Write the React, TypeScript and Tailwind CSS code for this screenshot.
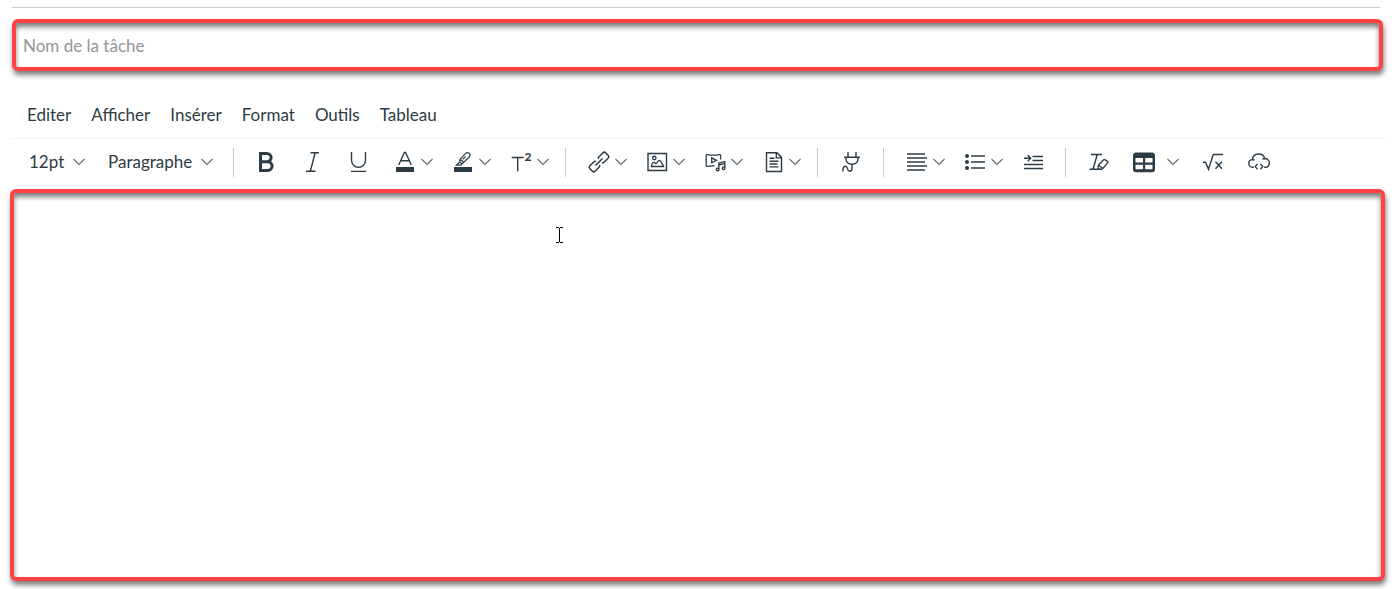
import type { ReactNode } from "react";

const menus = ["Editer", "Afficher", "Insérer", "Format", "Outils", "Tableau"];

const Chevron = ({ className = "" }: { className?: string }) => (
  <svg
    viewBox="0 0 12 8"
    className={`h-2 w-3 shrink-0 fill-none stroke-[#5f6b75] ${className}`}
    aria-hidden="true"
  >
    <path d="M0.5 1 6 6.5 11.5 1" strokeWidth="1.1" />
  </svg>
);

const Icon = ({ children }: { children: ReactNode }) => (
  <svg
    viewBox="0 0 22 22"
    className="size-[22px] shrink-0 overflow-visible fill-none stroke-[#2d3b45]"
    strokeWidth="1.4"
    aria-hidden="true"
  >
    {children}
  </svg>
);

type ToolProps = { label: string; menu?: boolean; wide?: boolean; children: ReactNode };

const Tool = ({ label, menu, wide, children }: ToolProps) => (
  <button
    type="button"
    aria-label={label}
    title={label}
    className={`flex h-10 shrink-0 items-center pl-3 ${
      wide ? "gap-3 pr-[11px]" : menu ? "gap-[6px] pr-[6px]" : "pr-3"
    }`}
  >
    <Icon>{children}</Icon>
    {menu && <Chevron />}
  </button>
);

const Separator = () => (
  <div className="ml-[10px] mr-[9px] h-[29px] w-px shrink-0 bg-[#c7cdd1]" />
);

const Picker = ({ label, value, className }: { label: string; value: string; className: string }) => (
  <div className={`relative flex shrink-0 items-center ${className}`}>
    <select aria-label={label} className="h-6 w-full appearance-none bg-transparent outline-none">
      <option>{value}</option>
    </select>
    <Chevron className="pointer-events-none absolute right-0" />
  </div>
);

export default function App() {
  return (
    <div className="relative bg-white px-[10px] pb-2 pt-[7px] font-[Lato,sans-serif] text-[17px] leading-6 text-[#2d3b45]">
      <hr className="ml-[2px] mr-[9px] border-t border-[#c7cdd1]" />
      <div className="mr-1">
        <input
          type="text"
          aria-label="Nom de la tâche"
          placeholder="Nom de la tâche"
          className="mx-[2px] mt-[11px] block h-[52px] w-[calc(100%-4px)] rounded-md border-4 border-[#ff4242] bg-white px-[7px] shadow-[1px_4px_5px_rgba(0,0,0,0.5),inset_0_4px_5px_rgba(0,0,0,0.5)] outline-none placeholder:text-[#959595]"
        />

        <nav className="ml-[2px] mt-[21px] flex h-[47px] items-center gap-5 border-b border-[#f2f2f2] pl-[15px]">
          {menus.map((menu) => (
            <button key={menu} type="button">
              {menu}
            </button>
          ))}
        </nav>

        <div className="flex h-[50px] items-center pb-1 pl-[19px]" role="toolbar" aria-label="Mise en forme">
          <Picker label="Taille de police" value="12pt" className="w-14" />
          <Picker label="Style de bloc" value="Paragraphe" className="ml-[23px] mr-[10px] w-[105px]" />
          <Separator />

          <Tool label="Gras">
            <path
              d="M5.5 2.5H12a4.1 4.1 0 0 1 0 8.2H5.5ZM5.5 10.7h7.2a4.4 4.4 0 0 1 0 8.8H5.5Z"
              strokeWidth="3"
            />
          </Tool>
          <Tool label="Italique">
            <path d="M9.5 1.7H18M5 20.3h9.5M14.2 1.7 9.3 20.3" />
          </Tool>
          <Tool label="Souligné">
            <path d="M4.5 1v8.2a7 7 0 0 0 14 0V1M4 20.4h15" />
          </Tool>
          <Tool label="Couleur du texte" menu>
            <path d="M5.7 14 11.4 1.5h1.2L18.3 14M7.8 9.8h8.4" />
            <path d="M3 16h18v5H3z" className="fill-[#2d3b45] stroke-none" />
          </Tool>
          <Tool label="Surlignage" menu>
            <path
              d="m9.2 8.2 5.3-5.6c1-1 2.7-1.2 3.8-.2 1 1 .8 2.6-.2 3.6l-5.4 5.5ZM9.2 8.2l-.6 3-3.2 3h4.4l1.2-1.4 1.7-1.3M11.7 8.3l3-3M8.6 11.2l2.4 1.6"
              strokeWidth="1.2"
            />
            <path d="M3 16h18v5H3z" className="fill-[#2d3b45] stroke-none" />
          </Tool>
          <Tool label="Exposant" menu>
            <path d="M2.7 6.5h12M8.7 6.5v13.8" />
            <text x="15.5" y="10" fontSize="12" className="fill-[#2d3b45] stroke-none font-black">
              2
            </text>
          </Tool>
          <Separator />

          <Tool label="Lien" menu>
            <g strokeWidth="1.5" transform="translate(12 11) rotate(-45)">
              <path d="M-2-2.3v-.2q0-1.2-1.4-1.2h-6q-1.8 0-1.8 1.8v3.8q0 1.8 1.8 1.8h6q1.4 0 1.4-1.2v-.2M2-2.3v-.2q0-1.2 1.4-1.2h6q1.8 0 1.8 1.8v3.8q0 1.8-1.8 1.8h-6Q2 3.7 2 2.5v-.2M-5 0H5" />
            </g>
          </Tool>
          <Tool label="Image" menu>
            <path d="M3 2.5h18.500v17H3Z" />
            <circle cx="9.3" cy="7" r="1.700" />
            <path
              d="M5.800 15.500h13.500M6.500 15.300c.3-2.300 1-4 2.300-4 1 0 1.400 1.300 2.200 1.300 1.200 0 1.500-3.300 3.400-3.300 2.200 0 2.400 4.400 4.300 6"
              strokeWidth="1.300"
            />
          </Tool>
          <Tool label="Média" menu>
            <path
              d="M11.500 14.800H9.200c-1.700 0-3.300.2-4.800.5q-1.200.2-1.200-1V4.600q0-1.200 1.200-1c4 .8 8 .8 12 0q1.200-.2 1.200 1v4"
              strokeWidth="1.300"
            />
            <path d="M8.700 6.800v5l4.800-2.500zM15.800 18.200v-6.200l6-1.400v6.400M15.800 14l6-1.400" strokeWidth="1.300" />
            <circle cx="14.600" cy="18.400" r="1.300" />
            <circle cx="20.600" cy="17.200" r="1.300" />
          </Tool>
          <Tool label="Document" menu>
            <path d="M5.500 1.700h10.300l4.700 4.700v14.100h-15ZM15.300 1.700v5.200h5.200" />
            <path d="M8.500 7.300h5M8.500 10.200h9M8.500 13h8M8.500 15.900h9" />
          </Tool>
          <Separator />

          <Tool label="Applications">
            <path d="M9 1v5.300M17 1v5.300M5 6.300h16M7 6.300v1.200c0 3.500 2 5.800 6 5.800s6-2.300 6-5.800V6.300M13 13.300v4c0 2-1 3-2.400 3-2.800 0-1.300-5-4.200-5-2 0-2.500 2.500-2.500 5.200" />
          </Tool>
          <Separator />

          <Tool label="Alignement" menu>
            <path d="M2 3h18M2 7h20M2 11h18M2 15h20M2 19h18" />
          </Tool>
          <Tool label="Liste" menu>
            <path d="M8 5h14M8 11h14M8 17h14" />
            <g className="fill-[#2d3b45] stroke-none">
              <circle cx="4" cy="5" r="2" />
              <circle cx="4" cy="11" r="2" />
              <circle cx="4" cy="17" r="2" />
            </g>
          </Tool>
          <Tool label="Augmenter le retrait">
            <path d="M11.500 5.500h10.500M11.500 9.500h10.500M3 13.500h19M3 17.500h19M3 7.200h6M6.700 4.200l3 3-3 3" />
          </Tool>
          <Separator />

          <Tool label="Effacer la mise en forme">
            <path d="M4 3.500h11M10.300 3.500 6 18.300M2.500 18.300h11.500" />
            <path
              d="m11.600 14 4.700-5q.6-.6 1.300-.3l3 1.700q.8.5.2 1.300l-5.200 6q-.5.600-1.200.600h-2.200q-1 0-1-1v-2.300q0-.6.400-1ZM11.600 14l4 3.500"
              strokeWidth="1.300"
            />
          </Tool>
          <Tool label="Tableau" menu wide>
            <path
              fillRule="evenodd"
              className="fill-[#2d3b45] stroke-none"
              d="M3 1.500h16a3 3 0 0 1 3 3v13.700a3 3 0 0 1-3 3H3a3 3 0 0 1-3-3V4.500a3 3 0 0 1 3-3ZM2.500 7v4.500H10V7ZM12.200 7v4.500h7.300V7ZM2.500 13.700v4.500H10v-4.500ZM12.200 13.700v4.500h7.300v-4.500Z"
            />
          </Tool>
          <Tool label="Équation">
            <path d="M1 11.200h2.500l3 7 4.800-14.700H21M13.500 10.700l6.500 7M20 10.700l-6.500 7" />
          </Tool>
          <Tool label="Intégrer">
            <path d="M5.800 16.300H4.500C2 16.300.8 14.300.8 12.400c0-2.100 1.500-3.700 3.600-3.800C4.800 5 7.600 3 10.700 3c3 0 5.300 1.700 6 4.500 2.700 0 4.600 1.900 4.600 4.400 0 2.600-1.800 4.400-4.300 4.400h-.8M17 7.500c-1 0-2 .3-2.600.8M4.400 8.600c1 0 1.700.2 2.300.7" />
            <path d="m9.500 13-2.300 2.600 2.300 2.600M12.500 13l2.300 2.600-2.300 2.600" strokeWidth="1.300" />
          </Tool>
        </div>

        <textarea
          aria-label="Contenu de la tâche"
          className="block h-[392px] w-full resize-none rounded-md border-4 border-[#ff4242] bg-white p-3 shadow-[1px_4px_5px_rgba(0,0,0,0.5),inset_0_4px_5px_rgba(0,0,0,0.5)] outline-none"
        />
      </div>

      {/* text cursor resting over the editor */}
      <svg
        viewBox="0 0 7 16"
        className="pointer-events-none absolute left-[556px] top-[227px] h-4 w-[7px] fill-none stroke-black"
        aria-hidden="true"
      >
        <path d="M0 .5h3M4 .5h3M3.5 1v14M0 15.5h3M4 15.5h3" shapeRendering="crispEdges" />
      </svg>
    </div>
  );
}
